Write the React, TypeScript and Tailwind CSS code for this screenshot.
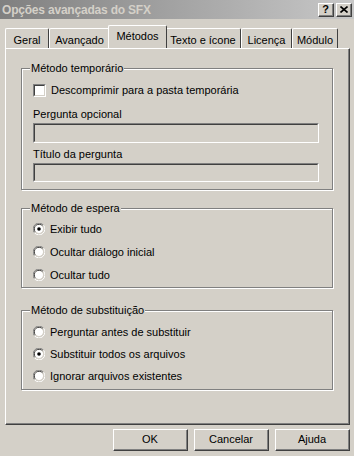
import React from "react";

const font = { fontFamily: "'Liberation Sans', Arial, sans-serif" };

function Radio({ checked }: { checked?: boolean }) {
  return (
    <svg width="12" height="12" viewBox="0 0 12 12" className="shrink-0">
      <path d="M10.5 2.2 A5.5 5.5 0 0 0 1.5 9.8" fill="none" stroke="#808080" strokeWidth="1" />
      <path d="M9.6 3 A4.4 4.4 0 0 0 2.4 9" fill="none" stroke="#404040" strokeWidth="1" />
      <circle cx="6" cy="6" r="4" fill="#ffffff" />
      <path d="M1.5 9.8 A5.5 5.5 0 0 0 10.5 2.2" fill="none" stroke="#ffffff" strokeWidth="1" />
      <path d="M2.4 9 A4.4 4.4 0 0 0 9.6 3" fill="none" stroke="#d4d0c8" strokeWidth="1" />
      {checked && <circle cx="6" cy="6" r="1.8" fill="#000000" />}
    </svg>
  );
}

function Group({ title, children, className }: { title: string; children: React.ReactNode; className?: string }) {
  return (
    <div className={"relative ml-[15px] mr-[15px] border border-[#808080] shadow-[1px_1px_0_#ffffff,inset_1px_1px_0_#ffffff] " + (className || "")}>
      <div className="absolute left-[8px] top-[-8px] bg-[#d4d0c8] px-[1px] text-[11px] leading-[14px] text-black">{title}</div>
      {children}
    </div>
  );
}

function Field({ h }: { h: string }) {
  return (
    <div className={"w-[286px] border-t border-l border-[#808080] border-r border-b border-r-white border-b-white " + h}>
      <div className="h-full w-full border-t border-l border-[#404040] border-r border-b border-r-[#d4d0c8] border-b-[#d4d0c8] bg-[#d4d0c8]" />
    </div>
  );
}

function Button({ label }: { label: string }) {
  return (
    <div className="h-[22px] w-[75px] border-t border-l border-white border-r border-b border-r-[#404040] border-b-[#404040]">
      <div className="flex h-full w-full items-center justify-center border-r border-b border-r-[#808080] border-b-[#808080] text-[11px] text-black">
        {label}
      </div>
    </div>
  );
}

function Tab({ label, selected, w }: { label: string; selected?: boolean; w: string }) {
  if (selected) {
    return (
      <div className={"relative z-10 -mx-[2px] mt-[-2px] h-[23px] border-t border-l border-white border-r border-r-[#404040] rounded-tl-[2px] rounded-tr-[2px] bg-[#d4d0c8] " + w}>
        <div className="flex h-full items-start justify-center pt-[3px] text-[11px] leading-[14px] text-black">{label}</div>
      </div>
    );
  }
  return (
    <div className={"h-[20px] border-t border-l border-white border-r border-r-[#404040] rounded-tl-[2px] rounded-tr-[2px] bg-[#d4d0c8] " + w}>
      <div className="flex h-full items-start justify-center pt-[4px] text-[11px] leading-[14px] text-black">{label}</div>
    </div>
  );
}

function CaptionBtn({ children }: { children: React.ReactNode }) {
  return (
    <div className="h-[14px] w-[16px] border-t border-l border-white border-r border-b border-r-[#404040] border-b-[#404040] bg-[#d4d0c8]">
      <div className="flex h-full w-full items-center justify-center border-r border-b border-r-[#808080] border-b-[#808080] text-[11px] font-bold leading-none text-black">
        {children}
      </div>
    </div>
  );
}

function Item({ label, checked }: { label: string; checked?: boolean }) {
  return (
    <div className="flex items-center gap-[5px]">
      <Radio checked={checked} />
      <span className="text-[11px] leading-[14px] text-black">{label}</span>
    </div>
  );
}

export default function App() {
  return (
    <div className="h-[456px] w-[354px] overflow-hidden bg-[#d4d0c8]" style={font}>
      {/* title bar */}
      <div className="flex h-[19px] items-center justify-between bg-gradient-to-r from-[#808080] to-[#c8c8c8] pl-[2px] pr-[2px]">
        <span className="text-[12px] font-bold tracking-[-0.2px] text-[#d4d0c8]">Opções avançadas do SFX</span>
        <div className="flex gap-[2px]">
          <CaptionBtn>?</CaptionBtn>
          <CaptionBtn>
            <svg width="8" height="7" viewBox="0 0 8 7">
              <path d="M0.5 0.5 L7.5 6.5 M7.5 0.5 L0.5 6.5" stroke="#000" strokeWidth="1.6" />
            </svg>
          </CaptionBtn>
        </div>
      </div>

      {/* tabs */}
      <div className="mt-[8px] flex items-end pl-[5px]">
        <Tab label="Geral" w="w-[44px]" />
        <Tab label="Avançado" w="w-[61px]" />
        <Tab label="Métodos" selected w="w-[59px]" />
        <Tab label="Texto e ícone" w="w-[76px]" />
        <Tab label="Licença" w="w-[51px]" />
        <Tab label="Módulo" w="w-[46px]" />
      </div>

      {/* panel */}
      <div className="ml-[5px] h-[377px] w-[345px] border-t border-l border-white border-r border-b border-r-[#404040] border-b-[#404040]">
        <div className="h-full w-full border-r border-b border-r-[#808080] border-b-[#808080] pt-[19px]">
          <Group title="Método temporário" className="h-[122px]">
            <div className="flex items-center gap-[5px] pl-[11px] pt-[14px]">
              <div className="h-[13px] w-[13px] border-t border-l border-[#808080] border-r border-b border-r-white border-b-white">
                <div className="h-full w-full border-t border-l border-[#404040] border-r border-b border-r-[#d4d0c8] border-b-[#d4d0c8] bg-white" />
              </div>
              <span className="text-[11px] leading-[14px] text-black">Descomprimir para a pasta temporária</span>
            </div>
            <div className="pl-[11px] pt-[10px] text-[11px] leading-[14px] text-black">Pergunta opcional</div>
            <div className="pl-[11px] pt-[2px]">
              <Field h="h-[20px]" />
            </div>
            <div className="pl-[11px] pt-[4px] text-[11px] leading-[14px] text-black">Título da pergunta</div>
            <div className="pl-[11px] pt-[2px]">
              <Field h="h-[19px]" />
            </div>
          </Group>

          <Group title="Método de espera" className="mt-[18px] h-[80px]">
            <div className="flex flex-col gap-[9px] pl-[11px] pt-[13px]">
              <Item label="Exibir tudo" checked />
              <Item label="Ocultar diálogo inicial" />
              <Item label="Ocultar tudo" />
            </div>
          </Group>

          <Group title="Método de substituição" className="mt-[22px] h-[80px]">
            <div className="flex flex-col gap-[8px] pl-[11px] pt-[14px]">
              <Item label="Perguntar antes de substituir" />
              <Item label="Substituir todos os arquivos" checked />
              <Item label="Ignorar arquivos existentes" />
            </div>
          </Group>
        </div>
      </div>

      {/* buttons */}
      <div className="mt-[4px] flex justify-end gap-[6px] pr-[4px]">
        <Button label="OK" />
        <Button label="Cancelar" />
        <Button label="Ajuda" />
      </div>
    </div>
  );
}
